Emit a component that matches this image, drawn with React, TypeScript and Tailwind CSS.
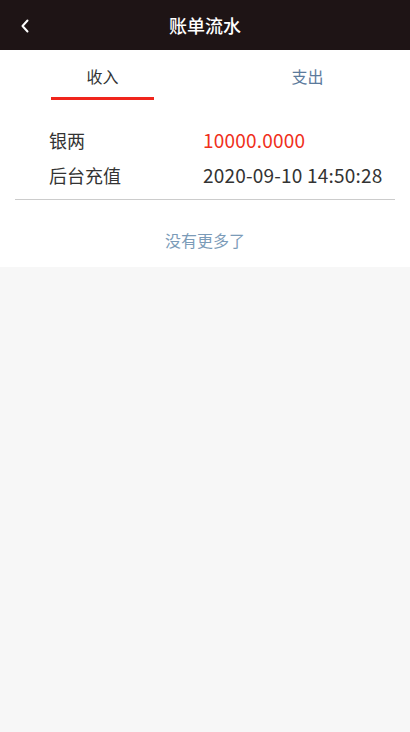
export default function App() {
  const font = { fontFamily: '"Noto Sans CJK SC", "Liberation Sans", sans-serif' };
  return (
    <div className="min-h-[732px] bg-[#f7f7f7] flex flex-col" style={font}>
      <div className="h-[50px] bg-[#1e1415] flex items-center relative">
        <svg className="absolute left-[19px] top-[19px]" width="12" height="14" viewBox="0 0 12 14">
          <path d="M8.5 1.5 L3.5 7 L8.5 12.5" stroke="#ffffff" strokeWidth="2" fill="none" strokeLinecap="round" strokeLinejoin="round" />
        </svg>
        <div className="flex-1 text-center text-white text-[18px] font-medium leading-none">账单流水</div>
      </div>
      <div className="bg-white">
        <div className="flex h-[51px]">
          <div className="flex-1 flex flex-col items-center">
            <div className="h-[47px] pt-[4px] flex items-center text-[16px] text-[#333333]">收入</div>
            <div className="w-[103px] h-[3px] bg-[#f0251c]" />
          </div>
          <div className="flex-1 flex flex-col items-center">
            <div className="h-[47px] pt-[4px] flex items-center text-[16px] text-[#5b7a9c]">支出</div>
          </div>
        </div>
        <div className="px-[15px]">
          <div className="pt-[22px] pb-[6px] border-b border-[#cccccc]">
            <div className="flex h-[35px] items-center text-[18px]">
              <div className="w-[188px] pl-[34px] text-[#333333]">银两</div>
              <div className="text-[#f0301c] text-[19px] tracking-[0.2px]">10000.0000</div>
            </div>
            <div className="flex h-[35px] items-center text-[18px]">
              <div className="w-[188px] pl-[34px] text-[#333333]">后台充值</div>
              <div className="text-[#333333] text-[19px] tracking-[0.2px]">2020-09-10 14:50:28</div>
            </div>
          </div>
        </div>
        <div className="h-[67px] flex items-center justify-center text-[16px] text-[#7b9bb8] pt-[13px]">没有更多了</div>
      </div>
    </div>
  );
}
